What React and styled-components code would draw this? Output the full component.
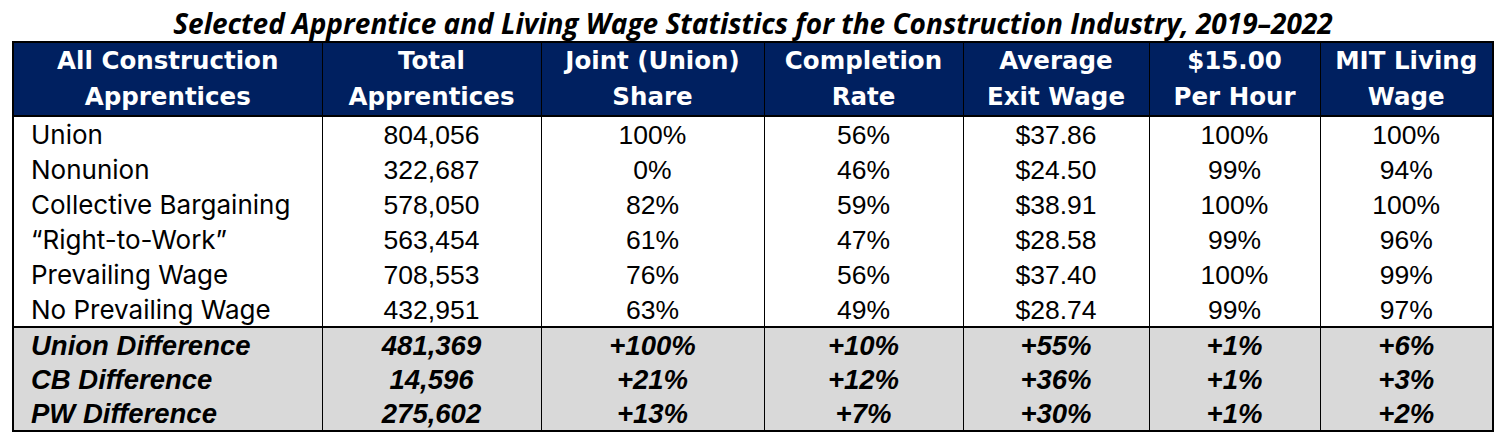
import React from "react";
import styled, { createGlobalStyle } from "styled-components";

const GlobalStyle = createGlobalStyle`
  html, body {
    margin: 0;
    padding: 0;
    background: #fff;
  }
`;

const Page = styled.div`
  width: 1506px;
  height: 448px;
  padding: 0 12px;
  box-sizing: border-box;
  background: #fff;
`;

const Title = styled.div`
  height: 41px;
  line-height: 47px;
  text-align: center;
  font-family: "Open Sans", sans-serif;
  font-style: italic;
  font-weight: 700;
  font-size: 28px;
  color: #000;
  white-space: nowrap;
`;

const Table = styled.table`
  width: 1482px;
  border-collapse: collapse;
  table-layout: fixed;
  border: 2px solid #000;
`;

const HeadCell = styled.th`
  background: #002060;
  color: #fff;
  font-family: "DejaVu Sans", sans-serif;
  font-weight: 700;
  font-size: 24.5px;
  line-height: 36px;
  height: 72px;
  padding: 0;
  text-align: center;
  vertical-align: middle;
  border-left: 1px solid #000;
  border-bottom: 2px solid #000;
`;

const Row = styled.tr`
  background: ${(p) => (p.$shaded ? "#d9d9d9" : "#fff")};
  height: ${(p) => (p.$shaded ? "34.7px" : "35.2px")};
  border-top: ${(p) => (p.$first ? "2px solid #000" : "none")};
`;

const Cell = styled.td`
  padding: 2px 0 0;
  padding-left: ${(p) => (p.$label ? "17px" : "0")};
  text-align: ${(p) => (p.$label ? "left" : "center")};
  font-family: "Liberation Sans", Arial, sans-serif;
  font-size: 26.5px;
  line-height: 30px;
  color: #000;
  border-left: 1px solid #000;
  white-space: nowrap;
  overflow: hidden;
`;

const LabelCell = styled(Cell)`
  font-family: "Inter", sans-serif;
  font-size: 26px;
`;

const DiffCell = styled(Cell)`
  font-size: 27.5px;
  font-weight: 700;
  font-style: italic;
`;

const columns = [
  { w: 309, head: ["All Construction", "Apprentices"] },
  { w: 219, head: ["Total", "Apprentices"] },
  { w: 223, head: ["Joint (Union)", "Share"] },
  { w: 199, head: ["Completion", "Rate"] },
  { w: 186, head: ["Average", "Exit Wage"] },
  { w: 171, head: ["$15.00", "Per Hour"] },
  { w: 173, head: ["MIT Living", "Wage"] },
];

const rows = [
  ["Union", "804,056", "100%", "56%", "$37.86", "100%", "100%"],
  ["Nonunion", "322,687", "0%", "46%", "$24.50", "99%", "94%"],
  ["Collective Bargaining", "578,050", "82%", "59%", "$38.91", "100%", "100%"],
  ["\u201cRight-to-Work\u201d", "563,454", "61%", "47%", "$28.58", "99%", "96%"],
  ["Prevailing Wage", "708,553", "76%", "56%", "$37.40", "100%", "99%"],
  ["No Prevailing Wage", "432,951", "63%", "49%", "$28.74", "99%", "97%"],
];

const diffs = [
  ["Union Difference", "481,369", "+100%", "+10%", "+55%", "+1%", "+6%"],
  ["CB Difference", "14,596", "+21%", "+12%", "+36%", "+1%", "+3%"],
  ["PW Difference", "275,602", "+13%", "+7%", "+30%", "+1%", "+2%"],
];

const App = () => {
  return (
    <Page>
      <GlobalStyle />
      <Title>
        Selected Apprentice and Living Wage Statistics for the Construction Industry, 2019–2022
      </Title>
      <Table>
        <colgroup>
          {columns.map((c, i) => (
            <col key={i} style={{ width: c.w }} />
          ))}
        </colgroup>
        <thead>
          <tr>
            {columns.map((c, i) => (
              <HeadCell key={i}>
                {c.head[0]}
                <br />
                {c.head[1]}
              </HeadCell>
            ))}
          </tr>
        </thead>
        <tbody>
          {rows.map((r, i) => (
            <Row key={i}>
              {r.map((v, j) =>
                j === 0 ? (
                  <LabelCell key={j} $label>
                    {v}
                  </LabelCell>
                ) : (
                  <Cell key={j}>{v}</Cell>
                )
              )}
            </Row>
          ))}
          {diffs.map((r, i) => (
            <Row key={i} $shaded $first={i === 0}>
              {r.map((v, j) => (
                <DiffCell key={j} $label={j === 0}>
                  {v}
                </DiffCell>
              ))}
            </Row>
          ))}
        </tbody>
      </Table>
    </Page>
  );
};

export default App;
